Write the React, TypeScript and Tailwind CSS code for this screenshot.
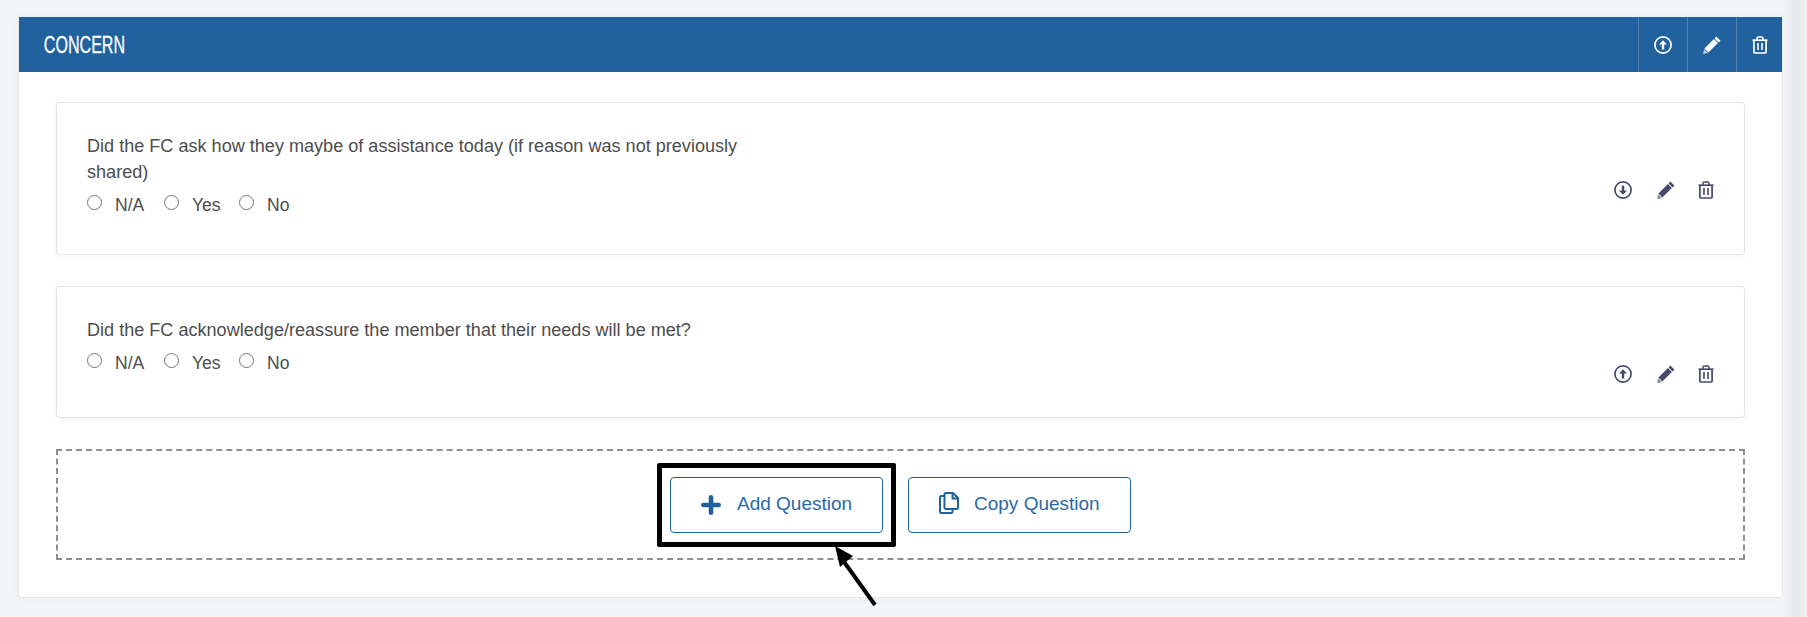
import React from "react";

const sans = "font-['Liberation_Sans',Arial,sans-serif]";

function ArrowCircle({ dir }: { dir: "up" | "down" }) {
  return (
    <svg viewBox="0 0 18 18" className="h-[18px] w-[18px]">
      <circle cx="9" cy="9" r="8.1" fill="none" stroke="currentColor" strokeWidth="1.7" />
      <path
        d={dir === "up" ? "M9 4.2 13 8.6H10.2V13.4H7.8V8.6H5Z" : "M9 13.8 13 9.4H10.2V4.6H7.8V9.4H5Z"}
        fill="currentColor"
      />
    </svg>
  );
}

function Pencil() {
  return (
    <svg viewBox="0 0 18 18" className="h-[18px] w-[18px]">
      <path d="M13.4 0.6 17.5 4.7 15.7 6.5 11.6 2.4Z" fill="currentColor" />
      <path d="M10.9 3.1 14.9 7.1 5.4 16.6 1.4 12.6Z" fill="currentColor" />
      <path d="M1 13.2 4.8 17 0.2 17.9Z" fill="currentColor" opacity="0.7" />
    </svg>
  );
}

function Trash() {
  return (
    <svg viewBox="0 0 18 18" className="h-[18px] w-[18px]" fill="none" stroke="currentColor">
      <path d="M1.5 4.2H16.5" strokeWidth="1.7" />
      <path d="M6 4V2.4C6 1.6 6.6 1 7.4 1H10.6C11.4 1 12 1.6 12 2.4V4" strokeWidth="1.5" />
      <path d="M2.9 4.5V16C2.9 16.6 3.3 17 3.9 17H14.1C14.7 17 15.1 16.6 15.1 16V4.5" strokeWidth="1.7" />
      <path d="M7 7V14M11 7V14" strokeWidth="1.6" />
    </svg>
  );
}

function Choices({ name }: { name: string }) {
  const options = [
    { label: "N/A", width: "w-[77px]" },
    { label: "Yes", width: "w-[75px]" },
    { label: "No", width: "" },
  ];
  return (
    <div className="mt-[6px] flex h-[26px] items-center">
      {options.map((o) => (
        <label key={o.label} className={`flex items-center ${o.width}`}>
          <input type="radio" name={name} className="m-0 mb-[4px] h-[15px] w-[15px]" />
          <span className="ml-[13px] mt-[2px] text-[17.5px] leading-[26px]">{o.label}</span>
        </label>
      ))}
    </div>
  );
}

function QuestionCard({
  text,
  name,
  dir,
  height,
}: {
  text: string;
  name: string;
  dir: "up" | "down";
  height: string;
}) {
  return (
    <div
      className={`flex justify-between rounded border border-[#e3e5e8] bg-white pl-[30px] pr-[29px] pt-[30px] shadow-[0_1px_6px_rgba(0,0,0,0.05)] ${height}`}
    >
      <div className="w-[670px] text-[#4d4d4d]">
        <p className="text-[18.08px] leading-[26px]">{text}</p>
        <Choices name={name} />
      </div>
      <div className="mt-[48px] flex h-[18px] items-start text-[#474a6b]">
        <ArrowCircle dir={dir} />
        <div className="ml-[25px]">
          <Pencil />
        </div>
        <div className="ml-[22px]">
          <Trash />
        </div>
      </div>
    </div>
  );
}

export default function App() {
  return (
    <div className={`flex h-[617px] overflow-hidden bg-[#f4f5f7] ${sans}`}>
      <div className="flex-1 pl-[18px] pt-[17px]">
        <div className="h-[581px] overflow-visible rounded border-x border-b border-[#e6e8eb] bg-white shadow-[0_0_8px_rgba(0,0,0,0.04)]">
          <div className="flex h-[55px] items-center justify-between bg-[#21629e] text-white">
            <span className="origin-left scale-x-[0.67] pl-[37px] text-[24px] whitespace-nowrap [-webkit-text-stroke:0.3px_white]">
              CONCERN
            </span>
            <div className="flex h-full">
              <div className="flex w-[49px] items-center justify-center border-l border-white/20">
                <ArrowCircle dir="up" />
              </div>
              <div className="flex w-[49px] items-center justify-center border-l border-white/20">
                <Pencil />
              </div>
              <div className="flex w-[46px] items-center justify-center border-l border-white/20">
                <Trash />
              </div>
            </div>
          </div>

          <div className="flex flex-col px-[37px] pt-[30px]">
            <QuestionCard
              text="Did the FC ask how they maybe of assistance today (if reason was not previously shared)"
              name="q1"
              dir="down"
              height="h-[153px]"
            />
            <div className="h-[31px]" />
            <QuestionCard
              text="Did the FC acknowledge/reassure the member that their needs will be met?"
              name="q2"
              dir="up"
              height="h-[132px]"
            />
            <div className="mt-[31px] flex h-[111px] items-center justify-center gap-[25px] border-2 border-dashed border-[#8f8f8f]">
              <div className="relative">
                <button className="flex h-[56px] w-[213px] items-center gap-[16px] rounded border border-[#21629e] bg-white pl-[30px] text-[19px] text-[#2b6aa6]">
                  <svg viewBox="0 0 20 20" className="h-[20px] w-[20px] text-[#21629e]" fill="none" stroke="currentColor" strokeWidth="4.6" strokeLinecap="round">
                    <path d="M10 2.3V17.7M2.3 10H17.7" />
                  </svg>
                  Add Question
                </button>
                <div className="pointer-events-none absolute -inset-x-[13px] -inset-y-[14px] rounded-[2px] border-[5px] border-black" />
                <svg viewBox="0 0 50 64" className="pointer-events-none absolute left-[162px] top-[68px] h-[64px] w-[50px]">
                  <path d="M43 60 10 14" stroke="black" strokeWidth="4" />
                  <path d="M3 1 8 22 21 11Z" fill="black" />
                </svg>
              </div>
              <button className="flex h-[56px] w-[223px] items-center gap-[15px] rounded border border-[#21629e] bg-white pl-[30px] text-[19px] text-[#2b6aa6]">
                <svg viewBox="0 0 20 22" className="-mt-[3px] h-[22px] w-[20px] text-[#21629e]" fill="none" stroke="currentColor" strokeWidth="2" strokeLinejoin="round">
                  <path d="M5.5 4H2.5C1.7 4 1 4.7 1 5.5V19.5C1 20.3 1.7 21 2.5 21H12C12.8 21 13.5 20.3 13.5 19.5V17" />
                  <path d="M7 1H14L19 6V15.5C19 16.3 18.3 17 17.5 17H7C6.2 17 5.5 16.3 5.5 15.5V2.5C5.5 1.7 6.2 1 7 1Z" />
                  <path d="M13.5 1V6.5H19" />
                </svg>
                Copy Question
              </button>
            </div>
          </div>
        </div>
      </div>
      <div className="w-[24px] bg-[linear-gradient(to_right,#f3f4f6,#e5e8eb_55%,#eef0f2)]" />
    </div>
  );
}
